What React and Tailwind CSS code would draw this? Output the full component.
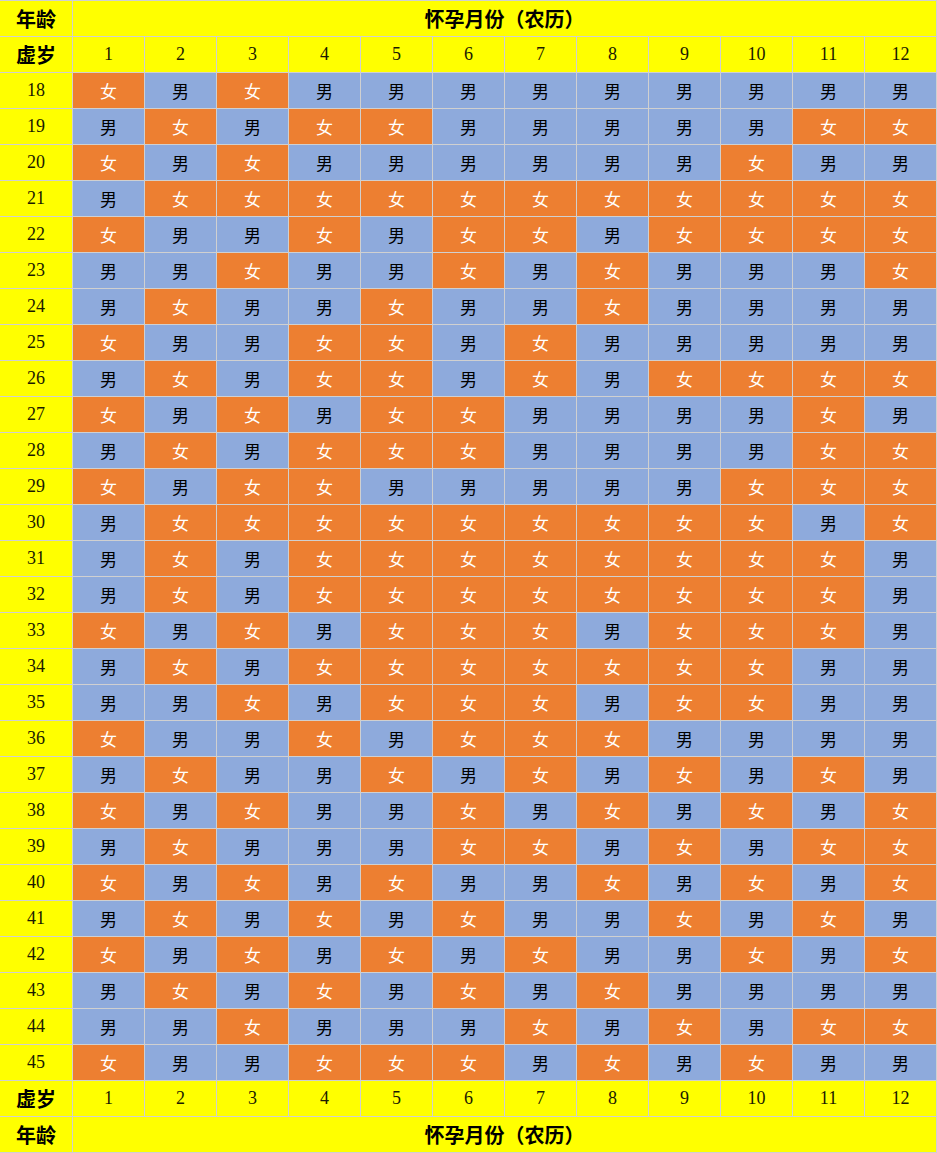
const ROWS = {
  18: '女男女男男男男男男男男男',
  19: '男女男女女男男男男男女女',
  20: '女男女男男男男男男女男男',
  21: '男女女女女女女女女女女女',
  22: '女男男女男女女男女女女女',
  23: '男男女男男女男女男男男女',
  24: '男女男男女男男女男男男男',
  25: '女男男女女男女男男男男男',
  26: '男女男女女男女男女女女女',
  27: '女男女男女女男男男男女男',
  28: '男女男女女女男男男男女女',
  29: '女男女女男男男男男女女女',
  30: '男女女女女女女女女女男女',
  31: '男女男女女女女女女女女男',
  32: '男女男女女女女女女女女男',
  33: '女男女男女女女男女女女男',
  34: '男女男女女女女女女女男男',
  35: '男男女男女女女男女女男男',
  36: '女男男女男女女女男男男男',
  37: '男女男男女男女男女男女男',
  38: '女男女男男女男女男女男女',
  39: '男女男男男女女男女男女女',
  40: '女男女男女男男女男女男女',
  41: '男女男女男女男男女男女男',
  42: '女男女男女男女男男女男女',
  43: '男女男女男女男女男男男男',
  44: '男男女男男男女男女男女女',
  45: '女男男女女女男女男女男男',
}

const MONTHS = [1, 2, 3, 4, 5, 6, 7, 8, 9, 10, 11, 12]

const cell = 'flex h-[35px] items-center justify-center'
const serif = "font-['Liberation_Serif','Noto_Sans_CJK_SC',serif] text-[18px]"
const cjk = "font-['Noto_Sans_CJK_SC',sans-serif] text-[17px]"
const bold = "font-['Noto_Sans_CJK_SC',sans-serif] text-[20px] font-bold"

function HeaderRow() {
  return (
    <>
      <div className={`${cell} ${bold} bg-[#ffff00] text-black`}>年龄</div>
      <div className={`${cell} ${bold} col-span-12 bg-[#ffff00] text-black`}>怀孕月份（农历）</div>
    </>
  )
}

function MonthRow() {
  return (
    <>
      <div className={`${cell} ${bold} bg-[#ffff00] text-black`}>虚岁</div>
      {MONTHS.map((m) => (
        <div key={m} className={`${cell} ${serif} bg-[#ffff00] text-[#1a1a00]`}>
          {m}
        </div>
      ))}
    </>
  )
}

export default function App() {
  return (
    <div className="w-[937px] bg-white">
      <div className="grid w-[937px] grid-cols-[72px_repeat(12,71px)] gap-px border-t border-r border-b border-[#d0d0d0] bg-[#d0d0d0]">
        <HeaderRow />
        <MonthRow />
        {Object.entries(ROWS).map(([age, row]) => (
          <div key={age} className="contents">
            <div className={`${cell} ${serif} bg-[#ffff00] text-[#1a1a00]`}>{age}</div>
            {row.split('').map((g, i) =>
              g === '女' ? (
                <div key={i} className={`${cell} ${cjk} bg-[#ed7f31] text-white`}>女</div>
              ) : (
                <div key={i} className={`${cell} ${cjk} bg-[#8eaadc] text-black`}>男</div>
              )
            )}
          </div>
        ))}
        <MonthRow />
        <HeaderRow />
      </div>
    </div>
  )
}
